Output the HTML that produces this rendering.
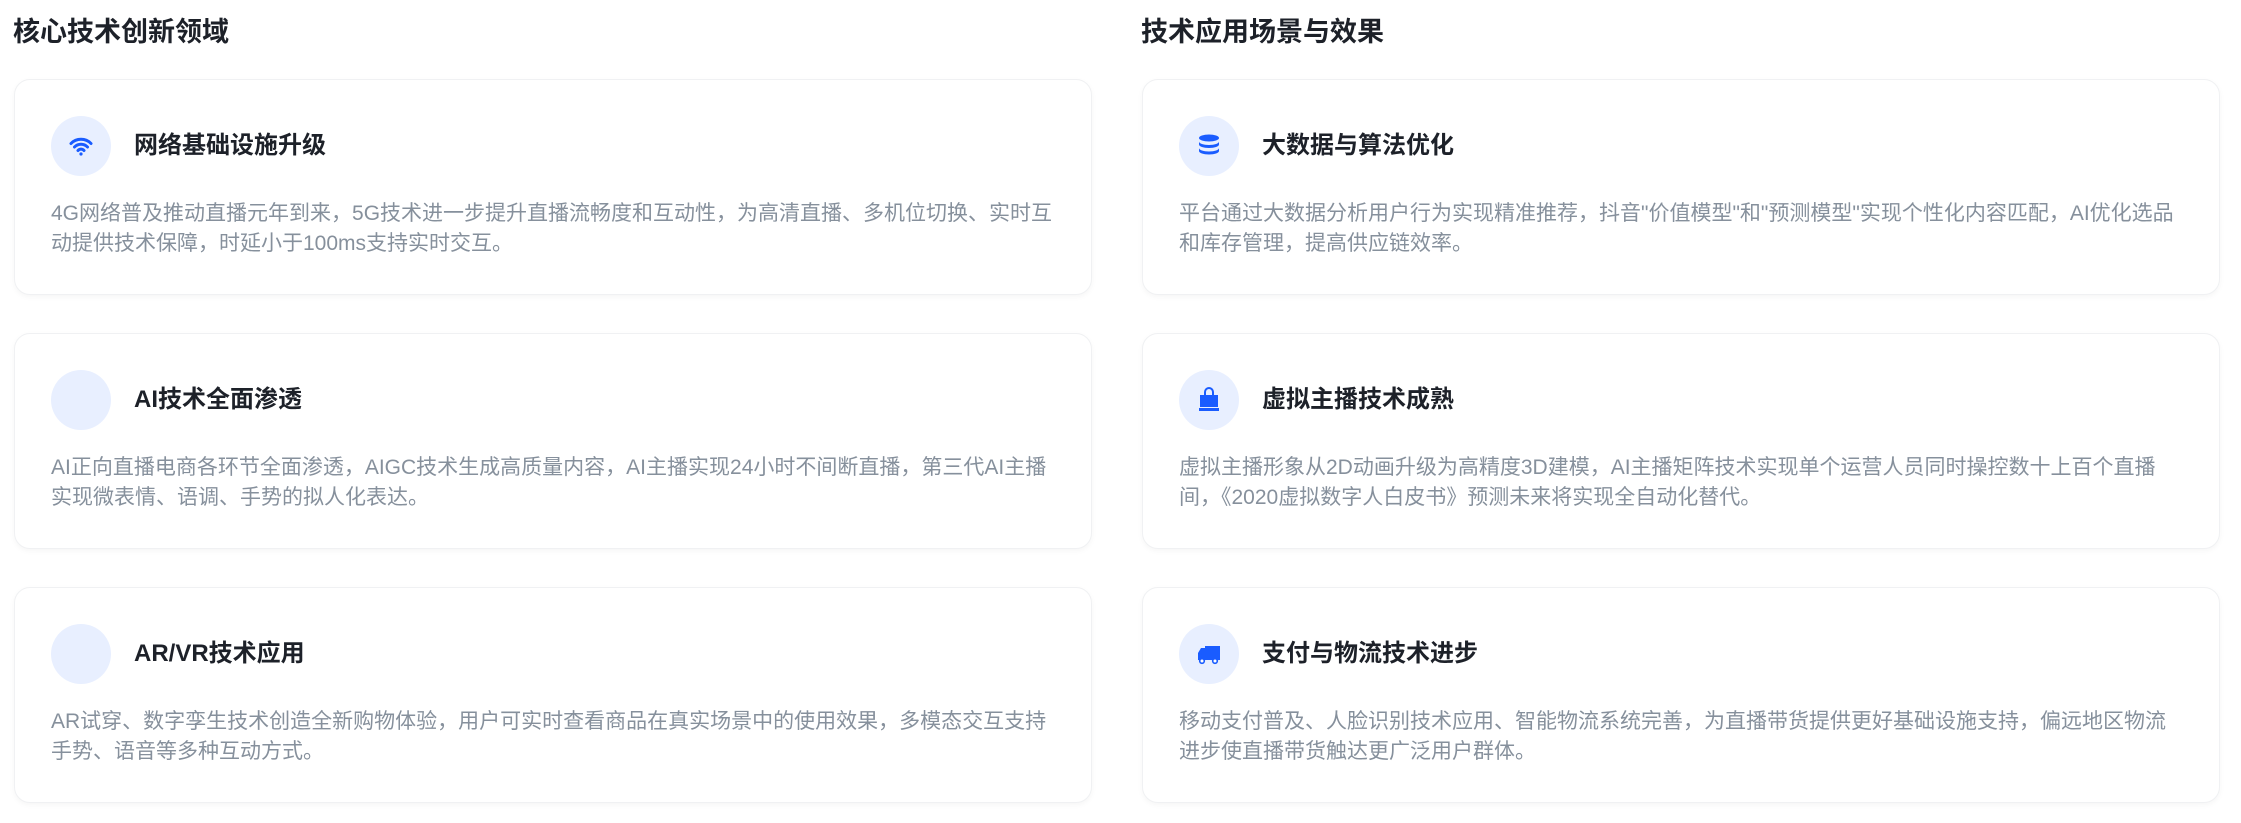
<!DOCTYPE html>
<html><head><meta charset="utf-8"><style>
*{margin:0;padding:0;box-sizing:border-box}
body{width:2241px;height:823px;background:#fff;font-family:"Liberation Sans","Noto Sans CJK SC",sans-serif;position:relative;overflow:hidden}
h2{position:absolute;top:15px;font-size:27px;font-weight:700;color:#1d2129;line-height:34px}
.card{position:absolute;width:1078px;height:216px;background:#fff;border:1px solid #f0f1f3;border-radius:16px;box-shadow:0 2px 6px rgba(0,0,0,0.04)}
.ic{position:absolute;left:36px;top:36px;width:60px;height:60px;border-radius:50%;background:#e8efff;display:flex;align-items:center;justify-content:center}
.t{position:absolute;left:119px;top:51px;font-size:24px;font-weight:700;color:#1d2129;line-height:30px;white-space:nowrap}
.d{position:absolute;left:36px;top:119px;font-size:21px;color:#86909c;line-height:30px;white-space:nowrap}
</style></head><body>
<h2 style="left:13px">核心技术创新领域</h2>
<h2 style="left:1141px">技术应用场景与效果</h2>

<div class="card" style="left:14px;top:79px">
<div class="ic"><svg width="24" height="24" viewBox="0 0 24 24"><path d="M2 9.5a14 14 0 0 1 20 0" stroke="#1a5cff" stroke-width="3" fill="none" stroke-linecap="round"/><path d="M5.5 13a9 9 0 0 1 13 0" stroke="#1a5cff" stroke-width="3" fill="none" stroke-linecap="round"/><path d="M9 16.5a4 4 0 0 1 6 0" stroke="#1a5cff" stroke-width="3" fill="none" stroke-linecap="round"/><circle cx="12" cy="20" r="1.6" fill="#1a5cff"/></svg></div>
<div class="t">网络基础设施升级</div>
<div class="d">4G网络普及推动直播元年到来，5G技术进一步提升直播流畅度和互动性，为高清直播、多机位切换、实时互<br>动提供技术保障，时延小于100ms支持实时交互。</div>
</div>

<div class="card" style="left:14px;top:333px">
<div class="ic"></div>
<div class="t">AI技术全面渗透</div>
<div class="d">AI正向直播电商各环节全面渗透，AIGC技术生成高质量内容，AI主播实现24小时不间断直播，第三代AI主播<br>实现微表情、语调、手势的拟人化表达。</div>
</div>

<div class="card" style="left:14px;top:587px">
<div class="ic"></div>
<div class="t">AR/VR技术应用</div>
<div class="d">AR试穿、数字孪生技术创造全新购物体验，用户可实时查看商品在真实场景中的使用效果，多模态交互支持<br>手势、语音等多种互动方式。</div>
</div>

<div class="card" style="left:1142px;top:79px">
<div class="ic"><svg width="22" height="24" viewBox="0 0 22 24"><ellipse cx="11" cy="4" rx="10" ry="3.5" fill="#1a5cff"/><path d="M1 7.5c0 2 4.5 3.5 10 3.5s10-1.5 10-3.5v3c0 2-4.5 3.5-10 3.5S1 12.5 1 10.5z" fill="#1a5cff"/><path d="M1 14c0 2 4.5 3.5 10 3.5s10-1.5 10-3.5v3c0 2-4.5 3.5-10 3.5S1 19 1 17z" fill="#1a5cff"/></svg></div>
<div class="t">大数据与算法优化</div>
<div class="d">平台通过大数据分析用户行为实现精准推荐，抖音"价值模型"和"预测模型"实现个性化内容匹配，AI优化选品<br>和库存管理，提高供应链效率。</div>
</div>

<div class="card" style="left:1142px;top:333px">
<div class="ic"><svg width="22" height="26" viewBox="0 0 22 26"><path d="M7 8V5a4 4 0 0 1 8 0v3" stroke="#1a5cff" stroke-width="2" fill="none"/><path d="M2 8h18v12H2z" fill="#1a5cff"/><path d="M1 21h20v3H1z" fill="#1a5cff"/></svg></div>
<div class="t">虚拟主播技术成熟</div>
<div class="d">虚拟主播形象从2D动画升级为高精度3D建模，AI主播矩阵技术实现单个运营人员同时操控数十上百个直播<br>间，《2020虚拟数字人白皮书》预测未来将实现全自动化替代。</div>
</div>

<div class="card" style="left:1142px;top:587px">
<div class="ic"><svg width="24" height="22" viewBox="0 0 24 22"><path d="M8 3h15v14H8z" fill="#1a5cff"/><path d="M1 10l3-5h4v12H1z" fill="#1a5cff"/><circle cx="5" cy="18" r="2.3" fill="#fff" stroke="#1a5cff" stroke-width="1.6"/><circle cx="18" cy="18" r="2.3" fill="#fff" stroke="#1a5cff" stroke-width="1.6"/></svg></div>
<div class="t">支付与物流技术进步</div>
<div class="d">移动支付普及、人脸识别技术应用、智能物流系统完善，为直播带货提供更好基础设施支持，偏远地区物流<br>进步使直播带货触达更广泛用户群体。</div>
</div>
</body></html>
